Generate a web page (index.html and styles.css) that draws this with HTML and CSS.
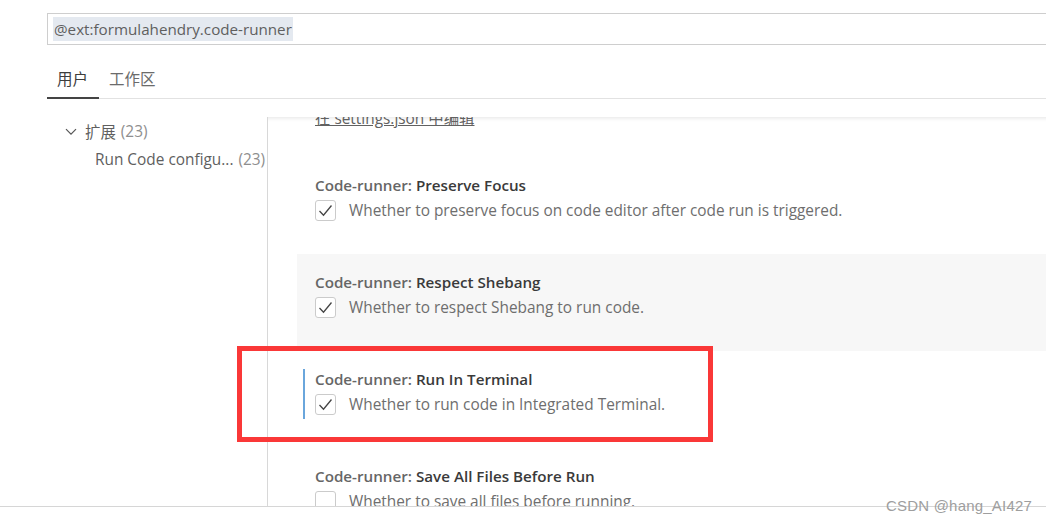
FILE: index.html
```html
<!DOCTYPE html>
<html lang="zh">
<head>
<meta charset="utf-8">
<title>Settings</title>
<link rel="stylesheet" href="styles.css">
</head>
<body>
<div class="page">
  <div class="app">
    <div class="search">
      <span class="query">@ext:formulahendry.code-runner</span>
    </div>
    <div class="tabs">
      <div class="tab active">用户</div>
      <div class="tab">工作区</div>
    </div>
    <div class="body">
      <div class="tree">
        <div class="row group">
          <svg class="chev" width="12" height="8" viewBox="0 0 12 8"><path d="M1 1.2 L6 6.2 L11 1.2" fill="none" stroke="#555" stroke-width="1.2"/></svg>
          <span class="name">扩展</span><span class="count">(23)</span>
        </div>
        <div class="row leaf">
          <span class="name">Run Code configu...</span><span class="count">(23)</span>
        </div>
      </div>
      <div class="content">
        <div class="list">
          <div class="item tail">
            <div class="contents">
              <a class="edit-link">在 settings.json 中编辑</a>
            </div>
          </div>
          <div class="item">
            <div class="contents">
              <div class="title"><span class="cat">Code-runner: </span><span class="key">Preserve Focus</span></div>
              <div class="value">
                <span class="check on"><svg width="15" height="13" viewBox="0 0 15 13"><path d="M1.5 7 L5.5 11.2 L13.5 1.5" fill="none" stroke="#444" stroke-width="1.3"/></svg></span>
                <span class="desc">Whether to preserve focus on code editor after code run is triggered.</span>
              </div>
            </div>
          </div>
          <div class="item hover">
            <div class="contents">
              <div class="title"><span class="cat">Code-runner: </span><span class="key">Respect Shebang</span></div>
              <div class="value">
                <span class="check on"><svg width="15" height="13" viewBox="0 0 15 13"><path d="M1.5 7 L5.5 11.2 L13.5 1.5" fill="none" stroke="#444" stroke-width="1.3"/></svg></span>
                <span class="desc">Whether to respect Shebang to run code.</span>
              </div>
            </div>
          </div>
          <div class="item focused">
            <div class="contents">
              <div class="title"><span class="cat">Code-runner: </span><span class="key">Run In Terminal</span></div>
              <div class="value">
                <span class="check on"><svg width="15" height="13" viewBox="0 0 15 13"><path d="M1.5 7 L5.5 11.2 L13.5 1.5" fill="none" stroke="#444" stroke-width="1.3"/></svg></span>
                <span class="desc">Whether to run code in Integrated Terminal.</span>
              </div>
            </div>
          </div>
          <div class="item">
            <div class="contents">
              <div class="title"><span class="cat">Code-runner: </span><span class="key">Save All Files Before Run</span></div>
              <div class="value">
                <span class="check"></span>
                <span class="desc">Whether to save all files before running.</span>
              </div>
            </div>
          </div>
        </div>
      </div>
    </div>
  </div>
  <div class="annotation"></div>
  <div class="watermark">CSDN @hang_AI427</div>
</div>
</body>
</html>
```
FILE: styles.css
```css
html, body {
  margin: 0;
  padding: 0;
  background: #ffffff;
}
body {
  font-family: "Open Sans", "Noto Sans CJK SC", sans-serif;
  color: #616161;
}
.page {
  position: relative;
  width: 1046px;
  height: 524px;
  overflow: hidden;
}
.app {
  height: 507px;
  border-bottom: 1px solid #d6d6d6;
  padding-left: 47px;
  padding-top: 13px;
  box-sizing: border-box;
  display: flex;
  flex-direction: column;
  overflow: hidden;
}
.search {
  width: 1010px;
  height: 32px;
  border: 1px solid #cecece;
  box-sizing: border-box;
  display: flex;
  align-items: center;
  padding-left: 5px;
  flex-shrink: 0;
}
.query {
  background: #e4e9f0;
  font-size: 15.2px;
  line-height: 24px;
  color: #5f5f5f;
  padding: 0 1px;
}
.tabs {
  display: flex;
  border-bottom: 1px solid #e2e2e2;
  height: 53px;
  flex-shrink: 0;
}
.tab {
  padding: 23px 11px 0 10px;
  font-size: 15.5px;
  line-height: 22px;
  color: #6b6b6b;
  box-sizing: border-box;
}
.tab.active {
  color: #3d3d3d;
  border-bottom: 2px solid #444444;
  margin-bottom: -1px;
}
.body {
  flex: 1;
  display: flex;
  margin-top: 18px;
  min-height: 0;
}
.tree {
  width: 220px;
  flex-shrink: 0;
  font-size: 15.4px;
}
.row {
  height: 28px;
  display: flex;
  align-items: center;
  white-space: nowrap;
}
.row.group {
  padding-left: 18px;
}
.row.group .chev {
  margin-right: 8px;
  margin-top: 1px;
}
.row.leaf {
  padding-left: 48px;
}
.name {
  color: #5f5f5f;
}
.count {
  color: #8e8e8e;
  margin-left: 5px;
}
.content {
  flex: 1;
  border-left: 1px solid #d8d8d8;
  padding-left: 29px;
  overflow: hidden;
  position: relative;
  box-shadow: inset 0 5px 4px -4px #e4e4e4;
}
.list {
  margin-top: -8px;
}
.item {
  padding: 18px 0 29px 6px;
}
.item.tail {
  padding-top: 0;
  padding-bottom: 28px;
}
.item.hover {
  background: #f7f7f7;
}
.contents {
  border-left: 2px solid transparent;
  padding-left: 10px;
}
.item.focused .contents {
  border-left-color: #6aa6dc;
}
.edit-link {
  display: block;
  font-size: 15.4px;
  line-height: 20px;
  color: #616161;
  text-decoration: underline;
}
.title {
  font-size: 15.2px;
  line-height: 20px;
  font-weight: 600;
  white-space: nowrap;
}
.cat {
  color: #666666;
}
.key {
  color: #3a3a3a;
}
.value {
  display: flex;
  align-items: flex-start;
  margin-top: 5px;
  height: 25px;
}
.check {
  width: 21px;
  height: 21px;
  box-sizing: border-box;
  border: 1px solid #cbcbcb;
  border-radius: 3px;
  background: #ffffff;
  display: flex;
  align-items: center;
  justify-content: center;
  flex-shrink: 0;
}
.desc {
  margin-left: 13px;
  font-size: 15.4px;
  line-height: 21px;
  color: #6e6e6e;
  white-space: nowrap;
}
.annotation {
  position: absolute;
  left: 237px;
  top: 346px;
  width: 476px;
  height: 96px;
  box-sizing: border-box;
  border: 5px solid #fa3838;
}
.watermark {
  position: absolute;
  left: 886px;
  top: 496px;
  font-family: "Liberation Sans", Arial, sans-serif;
  font-size: 15px;
  line-height: 20px;
  color: #9e9e9e;
  letter-spacing: 0.2px;
}
```
